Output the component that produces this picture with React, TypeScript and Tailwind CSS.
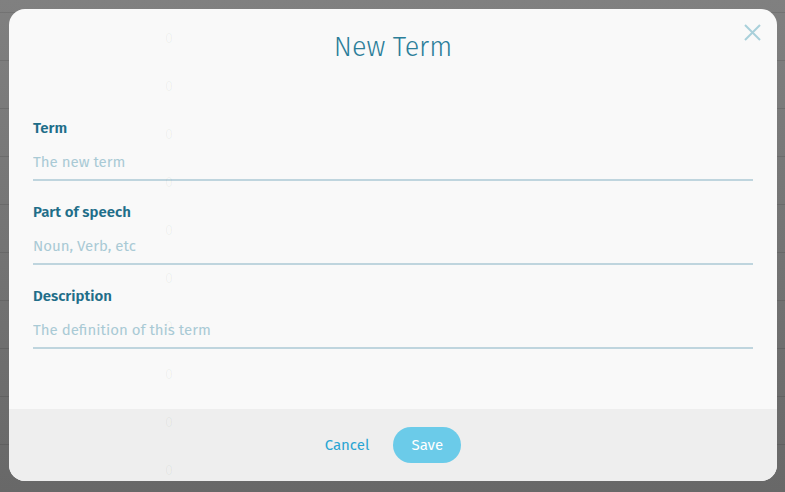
import React from 'react';

const rows = Array.from({ length: 11 }, (_, i) => i);

const fields = [
  { label: 'Term', placeholder: 'The new term' },
  { label: 'Part of speech', placeholder: 'Noun, Verb, etc' },
  { label: 'Description', placeholder: 'The definition of this term' },
];

export default function App() {
  return (
    <div
      className="relative h-[492px] w-[785px] overflow-hidden bg-gradient-to-b from-[#808080] to-[#686868]"
      style={{ fontFamily: '"Fira Sans", Lato, "Open Sans", sans-serif' }}
    >
      {/* table behind the overlay */}
      <div className="flex flex-col">
        <div className="h-[13px] border-b border-black/10" />
        {rows.map((r) => (
          <div key={r} className="h-[48px] border-b border-black/10" />
        ))}
      </div>

      {/* modal */}
      <div className="absolute left-[9px] top-[9px] flex h-[472px] w-[768px] flex-col overflow-hidden rounded-[16px] bg-[#f9f9f9]">
        <div className="relative flex h-[80px] items-start justify-center pt-[22px]">
          <h2 className="text-[27px] font-light leading-[32px] text-[#2b7e99]">New Term</h2>
          <button className="absolute right-[14px] top-[12px] flex h-[22px] w-[22px] items-center justify-center" aria-label="Close">
            <svg width="17" height="17" viewBox="0 0 17 17" fill="none" stroke="#a9d0da" strokeWidth="2">
              <path d="M1 1 L16 16 M16 1 L1 16" />
            </svg>
          </button>
        </div>

        <div className="flex flex-1 flex-col gap-[21px] px-[24px] pt-[29px]">
          {fields.map((f) => (
            <label key={f.label} className="flex flex-col">
              <span className="h-[20px] text-[15px] font-semibold leading-[20px] text-[#1f6e89]">{f.label}</span>
              <input
                placeholder={f.placeholder}
                className="mt-[4px] h-[39px] border-b-2 border-[#bfd5de] bg-transparent pb-[4px] pt-[6px] text-[15px] text-[#1f6e89] outline-none placeholder:text-[#a9cad5]"
              />
            </label>
          ))}
        </div>

        <div className="flex h-[72px] shrink-0 items-center justify-center gap-[24px] bg-[#eeeeee]">
          <button className="text-[15px] text-[#29a5d3]">Cancel</button>
          <button className="h-[36px] w-[68px] rounded-full bg-[#6bcbe9] text-[15px] text-white">Save</button>
        </div>
      </div>

      {/* column of the table showing faintly through the dialog */}
      <div className="pointer-events-none absolute left-[165px] top-[29px] flex flex-col">
        {rows.slice(0, 10).map((r) => (
          <span key={r} className="h-[48px] text-[14px] leading-[20px] text-black/[0.045]">0</span>
        ))}
      </div>
    </div>
  );
}
